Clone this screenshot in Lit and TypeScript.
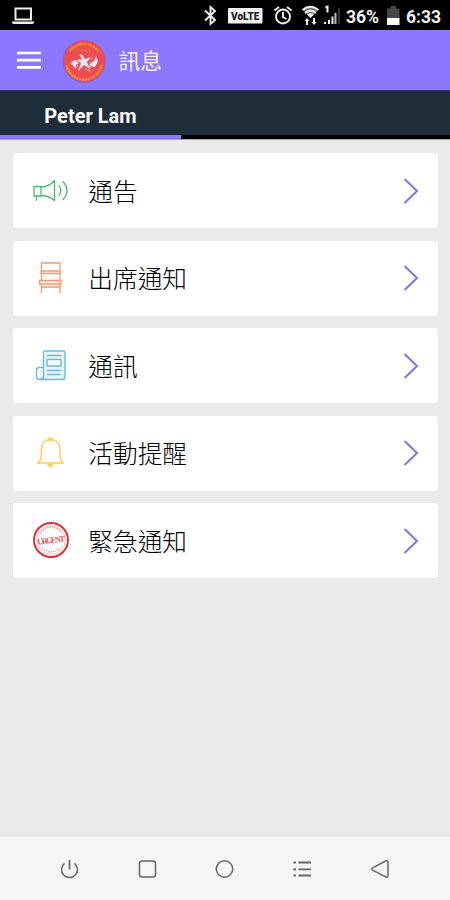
import { LitElement, html, css, svg } from "lit";
import { customElement, property } from "lit/decorators.js";

const megaphone = svg`<g fill="none" stroke="#4cb574" stroke-width="1.3" stroke-linejoin="round" stroke-linecap="round">
  <path d="M34 186.500H41V196H34Z M41 187Q49 187 54.500 180.500V200.500Q49 195.500 41 195.500M36.500 196.500V200"/>
  <path d="M59 185.500Q62.500 190.500 59 195.500M63 181.500Q71 190.500 63 199.500"/></g>`;
const chair = svg`<g fill="none" stroke="#f29a70" stroke-width="1.3">
  <path fill="#fdeee6" d="M41 271H60V273.500H41Z M39.500 280.500H61V284H39.500Z"/>
  <path d="M41.500 271V263H60V271M41.500 273V280M60 273V280M41.500 284V293M60 284V293M41.500 287H60"/></g>`;
const newspaper = svg`<g fill="none" stroke="#6bb8e4" stroke-width="1.4" stroke-linejoin="round" stroke-linecap="round">
  <path fill="#e8f5fd" d="M43.500 352.500Q43.500 351 45 351H63.500Q65 351 65 352.500V377Q65 379.500 62.500 379.500H40Q43.500 379.500 43.500 376Z"/>
  <path d="M43.500 367.500H39Q36.500 367.500 36.500 370V376Q36.500 379.500 40 379.500Q43.500 379.500 43.500 376"/>
  <path fill="#fff" d="M47 359.500H61V366H47Z"/><path d="M47.500 355.500H61M47.500 370.500H61M47.500 374.500H60"/></g>`;
const bell = svg`<g fill="none" stroke="#f7cf55" stroke-width="1.5" stroke-linejoin="round">
  <path d="M37.500 463C40.500 461 41.500 458.500 41.500 454.500V449C41.500 443.500 45 440 50.500 440S60 443.500 60 449V454.500C60 458.500 60.500 461 63.500 463Z"/>
  <path d="M47.500 439.500Q50.500 437 53.500 439.500M48 464.500Q50.500 468.500 53 464.500Z" fill="#f7cf55"/></g>`;
const stamp = svg`<g fill="none" stroke="#d8323a">
  <circle cx="51" cy="540" r="17" stroke-width="2"/><circle cx="51" cy="540" r="14.300" stroke-width=".6" opacity=".5"/>
  <path d="M40 534A12.500 12.500 0 0 1 61 532M42 548A12.500 12.500 0 0 0 60 548" stroke-width="1.300" stroke-dasharray="1.300 1.100" opacity=".55"/>
  <text x="51" y="543" transform="rotate(-7 51 540)" text-anchor="middle" textLength="28" font-family="Liberation Serif, serif" font-weight="700" font-size="8.500" fill="#d8323a" stroke="none" opacity=".8">URGENT</text></g>`;

const rows = [
  { label: "通告", icon: megaphone, box: "32 172 38 38" },
  { label: "出席通知", icon: chair, box: "32 259 38 38" },
  { label: "通訊", icon: newspaper, box: "32 347 38 38" },
  { label: "活動提醒", icon: bell, box: "32 434 38 38" },
  { label: "緊急通知", icon: stamp, box: "32 522 38 38" },
];

@customElement("message-row")
class MessageRow extends LitElement {
  @property() label = "";
  @property() box = "";
  @property({ attribute: false }) icon: unknown;
  static styles = css`
    :host { display: flex; align-items: center; height: 75px; box-sizing: border-box; padding: 0 18px 0 19.500px; background: #fff; border-radius: 4px; }
    .icon { width: 38px; height: 38px; flex: none; }
    .label { flex: 1; margin-left: 18.300px; padding-top: 4px; font-size: 24.700px; line-height: 36px; color: #000; white-space: nowrap; font-weight: 300; }
    .arrow { width: 18px; height: 28px; flex: none; }
  `;
  render() {
    return html`<svg class="icon" viewBox=${this.box}>${this.icon}</svg>
      <span class="label">${this.label}</span>
      <svg class="arrow" viewBox="0 0 18 28"><path d="M2.500 2L15 14L2.500 26" fill="none" stroke="#8272e8" stroke-width="2"/></svg>`;
  }
}

@customElement("status-bar")
class StatusBar extends LitElement {
  static styles = css`
    :host { display: flex; align-items: center; height: 30px; background: #000; color: #f2f2f2; box-sizing: border-box; padding: 0 10px 0 12px; font: 700 17.500px/30px Roboto, sans-serif; }
    svg { height: 30px; flex: none; }
    .laptop { width: 23px; }
    .bt { width: 14px; margin-left: auto; }
    .volte { width: 36px; margin-left: 10px; }
    .alarm { width: 20px; margin-left: 10px; }
    .wifi { width: 19px; margin-left: 8px; }
    .signal { width: 17px; margin-left: 3px; }
    .percent { width: 34px; margin-left: 6px; margin-top: 3px; }
    .battery { width: 14px; margin-left: 6px; }
    .time { width: 34px; margin-left: 6px; margin-top: 3px; }
  `;
  render() {
    return html`
      <svg class="laptop" viewBox="12 0 23 30"><path d="M15.500 8.500H31V19.500H15.500Z" fill="none" stroke="#eee" stroke-width="2"/><path d="M12 21.500H34V23L32.500 24H13.500L12 23Z" fill="#eee"/></svg>
      <svg class="bt" viewBox="203 0 14 30"><path d="M205 10.500L215 20L210.500 24V7L215 11L205 20.500" fill="none" stroke="#eee" stroke-width="1.900"/></svg>
      <svg class="volte" viewBox="227 0 36 30"><rect x="228" y="8" width="34.500" height="15.500" rx="1" fill="#f3f3f3"/><text x="231" y="20" textLength="28.500" lengthAdjust="spacingAndGlyphs" font-family="Roboto, sans-serif" font-size="11.500" font-weight="900" fill="#222">VoLTE</text></svg>
      <svg class="alarm" viewBox="273 0 20 30"><circle cx="283" cy="16.500" r="7" fill="none" stroke="#eee" stroke-width="1.900"/><path d="M283 12V17L286.500 19M274.500 10.500L279 7M291.500 10.500L287 7" fill="none" stroke="#eee" stroke-width="1.900"/></svg>
      <svg class="wifi" viewBox="301 0 19 30"><path d="M302.500 9.500Q310.500 3 318.500 9.500L310.500 18Z" fill="#777"/><g fill="none" stroke="#eee" stroke-width="1.900"><path d="M302.500 10Q310.500 3.500 318.500 10M305 13Q310.500 8.500 316 13"/></g><path d="M307 14.500Q310.500 12 314 14.500L310.500 18Z" fill="#eee"/><path d="M307 18L309.500 21H308V25H306V21H304.500ZM314 25L311.500 22H313V18H315V22H316.500Z" fill="#eee"/></svg>
      <svg class="signal" viewBox="323 0 17 30"><path d="M325.500 7.500L327.500 6.500V12.500M325 22V24M329 20V24M332.500 16.500V24" fill="none" stroke="#eee" stroke-width="2"/><path d="M335.500 13V24" stroke="#bbb" stroke-width="2"/><path d="M339 8V24" stroke="#444" stroke-width="1.500"/></svg>
      <span class="percent">36%</span>
      <svg class="battery" viewBox="386 0 14 30"><path d="M387 8.500H390.500V6H396V8.500H399.500V18H387Z" fill="#474747"/><path d="M387 18H399.500V25H387Z" fill="#fff"/></svg>
      <span class="time">6:33</span>`;
  }
}

@customElement("app-root")
class AppRoot extends LitElement {
  static styles = css`
    :host { display: flex; flex-direction: column; height: 900px; width: 450px; background: #eaeaea; font-family: Roboto, "Noto Sans CJK TC", sans-serif; overflow: hidden; }
    .header { display: flex; align-items: center; height: 60px; flex: none; background: #8c77fe; padding-left: 17px; box-sizing: border-box; }
    .menu { width: 24px; height: 18px; }
    .logo { width: 46px; height: 46px; margin-left: 20px; }
    .title { margin: 0 0 1px 11.500px; font: 400 21.700px/32px "Noto Sans CJK TC", sans-serif; color: #f6f0ff; }
    .tabs { display: flex; height: 50px; flex: none; box-sizing: border-box; background: #1f2d39; border-top: 1px solid #39366c; border-bottom: 1px solid #a6a6a6; }
    .tab { width: 181px; box-sizing: border-box; border-bottom: 4px solid #8c77fe; text-align: center; color: #fff; font: 700 20px/51px Roboto, sans-serif; }
    .rest { flex: 1; border-bottom: 4px solid #000; }
    .list { display: flex; flex-direction: column; gap: 12.500px; padding: 13px 12px 0 12.500px; flex: 1; }
    message-row { flex: none; }
    .nav { display: flex; align-items: center; justify-content: space-between; height: 63px; flex: none; background: #f5f5f5; box-sizing: border-box; padding: 0 59.500px 0 59px; }
    .nav svg { width: 21px; height: 22px; fill: none; stroke: #666; stroke-width: 1.500; }
  `;
  render() {
    return html`
      <status-bar></status-bar>
      <div class="header">
        <svg class="menu" viewBox="0 0 24 18"><path d="M0 2H24M0 9.200H24M0 16.400H24" stroke="#fff" stroke-width="2.700"/></svg>
        <svg class="logo" viewBox="0 0 46 46">
          <circle cx="23" cy="24.500" r="21.500" fill="#6f5bb9" opacity=".6"/>
          <circle cx="23" cy="24" r="20.700" fill="#ec4c52"/>
          <g transform="translate(0 1)">
          <path d="M9 13A17.500 17.500 0 0 1 37 13M5.500 27A17.800 17.800 0 0 0 40.500 27" fill="none" stroke="#ff8b32" stroke-width="2.200" stroke-dasharray="2.300 .5"/>
          <path d="M15.500 12.500H30.500" stroke="#f9803d" stroke-width="1.600" stroke-dasharray="2.200 1.800"/>
          <path d="M18 16L21.500 17L24 21L30 19L26 24L29 31L23 27L17 33L20 25L15 22L21 21ZM10 24L14 22L18 25L15 27L14.500 31L11.500 27ZM29 25L33 23L35 18L37 23.500L34 29L30 28L28 32Z" fill="#efe3f3"/>
          <path d="M9 25L11 27M17 27L15 30M30 21L32 20M24 31L29 33" stroke="#d9b6cf" stroke-width="1"/></g>
        </svg>
        <span class="title">訊息</span>
      </div>
      <div class="tabs"><div class="tab">Peter Lam</div><div class="rest"></div></div>
      <div class="list">${rows.map((r) => html`<message-row .label=${r.label} .box=${r.box} .icon=${r.icon}></message-row>`)}</div>
      <div class="nav">
        <svg viewBox="0 0 21 22"><path d="M10.500 2V11.500" stroke-width="1.700"/><path d="M5.500 5.300A8 8 0 1 0 15.500 5.300"/></svg>
        <svg viewBox="0 0 21 22"><rect x="2.500" y="3" width="16" height="16" rx="2.500"/></svg>
        <svg viewBox="0 0 21 22"><circle cx="10.500" cy="11" r="8.200"/></svg>
        <svg viewBox="0 0 21 22"><path d="M1.500 4.500H4M1.500 11.300H4M1.500 17.500H4" stroke-width="2.200"/><path d="M6.500 4.500H19M6.500 11.300H19M6.500 17.500H19" stroke-width="1.800"/></svg>
        <svg viewBox="0 0 21 22"><path d="M2.700 9.800L15.500 3Q18 2 18 4.500V17.500Q18 20 15.500 18.800L2.700 12.200Q1 11 2.700 9.800Z"/></svg>
      </div>`;
  }
}
